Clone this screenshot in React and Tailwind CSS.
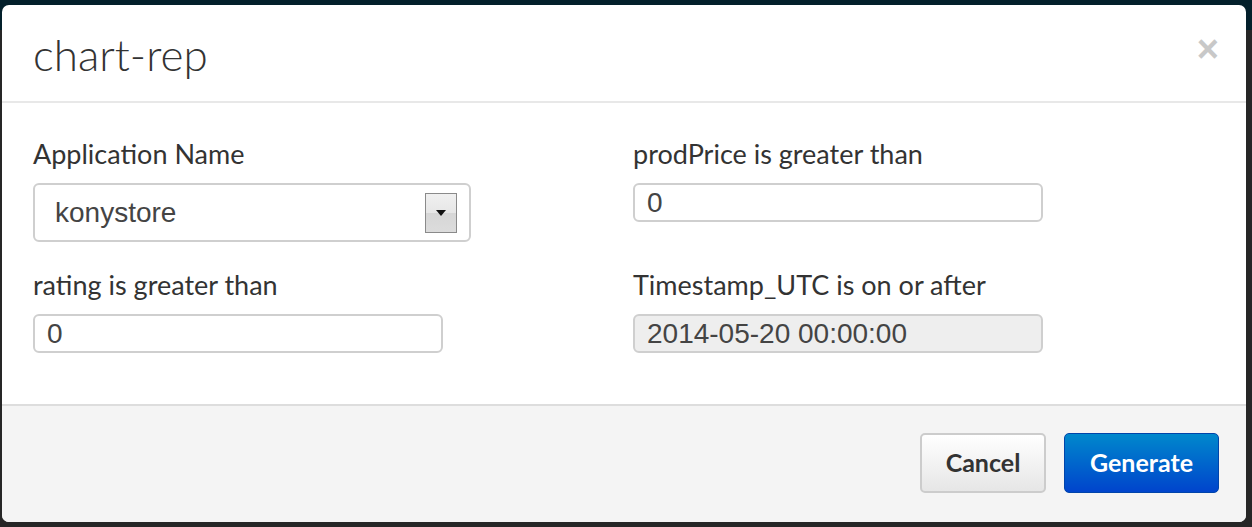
import React from "react";

function Field({ label, children }) {
  return (
    <div className="flex flex-col">
      <div className="text-[27px] leading-[30px] text-[#333] mb-[14px]">{label}</div>
      {children}
    </div>
  );
}

export default function App() {
  return (
    <div className="w-[1252px] h-[527px] bg-[linear-gradient(#03202b_0_30px,#262626_30px)] pt-[5px] pl-[2px] font-['Lato',sans-serif] overflow-hidden">
      <div className="w-[1244px] h-[517px] bg-white rounded-[7px] overflow-hidden flex flex-col">
        <div className="h-[98px] border-b-2 border-[#e8e8e8] flex items-center justify-between pl-[31px] pr-[27px] shrink-0">
          <div className="text-[44px] leading-none text-[#333] font-light mt-[2px]">chart-rep</div>
          <div className="text-[38px] leading-none font-bold text-[#c8c8c8] font-['Liberation_Sans',sans-serif] -mt-[8px]">×</div>
        </div>
        <div className="pt-[36px] pl-[31px] pb-[51px] grid grid-cols-[600px_600px] gap-y-[28px] shrink-0">
          <Field label="Application Name">
            <div className="w-[438px] h-[59px] border-2 border-[#cfcfcf] rounded-[6px] flex items-center justify-between pl-[20px] pr-[12px]">
              <span className="text-[28px] text-[#444] font-['Liberation_Sans',sans-serif]">konystore</span>
              <div className="w-[32px] h-[40px] border border-[#8a8a8a] bg-[linear-gradient(#f0f0f0_0%,#e6e6e6_50%,#d6d6d6_50%,#dcdcdc_100%)] flex items-center justify-center">
                <svg width="10" height="6" viewBox="0 0 10 6"><path d="M0 0h10L5 6z" fill="#111" /></svg>
              </div>
            </div>
          </Field>
          <Field label="prodPrice is greater than">
            <div className="w-[410px] h-[39px] border-2 border-[#cfcfcf] rounded-[6px] flex items-center pl-[12px]">
              <span className="text-[28px] text-[#444] font-['Liberation_Sans',sans-serif]">0</span>
            </div>
          </Field>
          <Field label="rating is greater than">
            <div className="w-[410px] h-[39px] border-2 border-[#cfcfcf] rounded-[6px] flex items-center pl-[12px]">
              <span className="text-[28px] text-[#444] font-['Liberation_Sans',sans-serif]">0</span>
            </div>
          </Field>
          <Field label="Timestamp_UTC is on or after">
            <div className="w-[410px] h-[39px] border-2 border-[#cfcfcf] bg-[#eeeeee] rounded-[6px] flex items-center pl-[12px]">
              <span className="text-[28px] text-[#444] font-['Liberation_Sans',sans-serif]">2014-05-20 00:00:00</span>
            </div>
          </Field>
        </div>
        <div className="flex-1 border-t-2 border-[#dddddd] bg-[#f4f4f4] flex items-start justify-end gap-[18px] pt-[27px] pr-[27px]">
          <button className="w-[126px] h-[60px] rounded-[5px] border-2 border-[#cccccc] bg-[linear-gradient(#ffffff,#e6e6e6)] text-[25px] font-bold text-[#333]">Cancel</button>
          <button className="w-[155px] h-[60px] rounded-[5px] border border-[#0044aa] bg-[linear-gradient(#0088cc,#0044cc)] text-[25px] font-bold text-white">Generate</button>
        </div>
      </div>
    </div>
  );
}
